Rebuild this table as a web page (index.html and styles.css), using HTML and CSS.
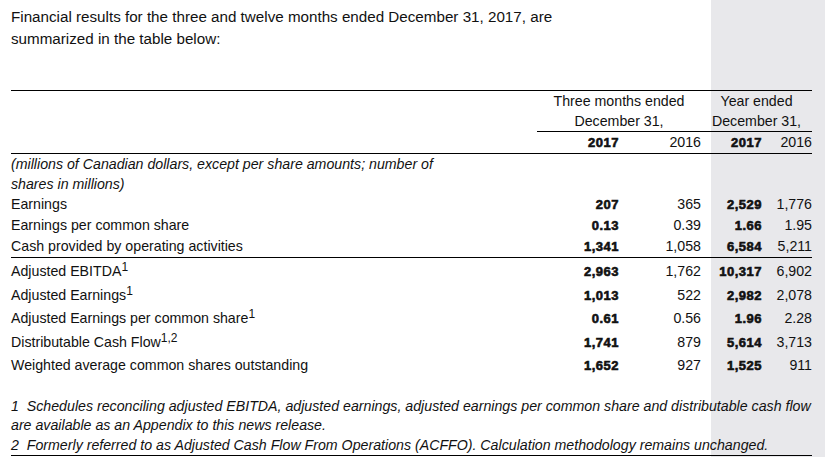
FILE: index.html
```html
<!DOCTYPE html>
<html lang="en">
<head>
<meta charset="utf-8">
<title>Financial results</title>
<link rel="stylesheet" href="styles.css">
</head>
<body>
<div class="page">
  <p class="intro">Financial results for the three and twelve months ended December 31, 2017, are<br>summarized in the table below:</p>

  <table class="results">
    <colgroup>
      <col class="c-label">
      <col class="c-a">
      <col class="c-b">
      <col class="c-c">
      <col class="c-d">
    </colgroup>
    <thead>
      <tr class="group-row">
        <th class="blank"></th>
        <th class="group" colspan="2">Three months ended<br>December 31,</th>
        <th class="group" colspan="2">Year ended<br>December 31,</th>
      </tr>
      <tr class="year-row">
        <th class="blank"></th>
        <th class="num strong">2017</th>
        <th class="num">2016</th>
        <th class="num strong">2017</th>
        <th class="num">2016</th>
      </tr>
    </thead>
    <tbody class="block-one">
      <tr class="note-row">
        <td class="note" colspan="5">(millions of Canadian dollars, except per share amounts; number of<br>shares in millions)</td>
      </tr>
      <tr>
        <td class="label">Earnings</td>
        <td class="num strong">207</td>
        <td class="num">365</td>
        <td class="num strong">2,529</td>
        <td class="num">1,776</td>
      </tr>
      <tr>
        <td class="label">Earnings per common share</td>
        <td class="num strong">0.13</td>
        <td class="num">0.39</td>
        <td class="num strong">1.66</td>
        <td class="num">1.95</td>
      </tr>
      <tr class="last">
        <td class="label">Cash provided by operating activities</td>
        <td class="num strong">1,341</td>
        <td class="num">1,058</td>
        <td class="num strong">6,584</td>
        <td class="num">5,211</td>
      </tr>
    </tbody>
    <tbody class="block-two">
      <tr class="first">
        <td class="label">Adjusted EBITDA<sup>1</sup></td>
        <td class="num strong">2,963</td>
        <td class="num">1,762</td>
        <td class="num strong">10,317</td>
        <td class="num">6,902</td>
      </tr>
      <tr>
        <td class="label">Adjusted Earnings<sup>1</sup></td>
        <td class="num strong">1,013</td>
        <td class="num">522</td>
        <td class="num strong">2,982</td>
        <td class="num">2,078</td>
      </tr>
      <tr>
        <td class="label">Adjusted Earnings per common share<sup>1</sup></td>
        <td class="num strong">0.61</td>
        <td class="num">0.56</td>
        <td class="num strong">1.96</td>
        <td class="num">2.28</td>
      </tr>
      <tr>
        <td class="label">Distributable Cash Flow<sup>1,2</sup></td>
        <td class="num strong">1,741</td>
        <td class="num">879</td>
        <td class="num strong">5,614</td>
        <td class="num">3,713</td>
      </tr>
      <tr>
        <td class="label">Weighted average common shares outstanding</td>
        <td class="num strong">1,652</td>
        <td class="num">927</td>
        <td class="num strong">1,525</td>
        <td class="num">911</td>
      </tr>
    </tbody>
  </table>

  <div class="footnotes">
    <p class="fn">1&nbsp; Schedules reconciling adjusted EBITDA, adjusted earnings, adjusted earnings per common share and distributable cash flow<br>are available as an Appendix to this news release.</p>
    <p class="fn">2&nbsp; Formerly referred to as Adjusted Cash Flow From Operations (ACFFO). Calculation methodology remains unchanged.</p>
  </div>
</div>
</body>
</html>
```

FILE: styles.css
```css
html {
  margin: 0;
}

body {
  margin: 0;
  min-height: 100vh;
  background: linear-gradient(to right, #ffffff 0, #ffffff 711px, #e8e8eb 711px, #e8e8eb 100%);
  color: #111;
  font-family: "Liberation Sans", Arial, sans-serif;
  font-size: 14.2px;
}

.page {
  width: 801px;
  padding: 6px 0 0 11px;
}

.intro {
  margin: 0;
  font-size: 15.2px;
  line-height: 22px;
  white-space: nowrap;
}

.results {
  margin-top: 40px;
  width: 801px;
  table-layout: fixed;
  border-collapse: separate;
  border-spacing: 0;
  font-size: 14.2px;
}

.c-label { width: 526px; }
.c-a { width: 82px; }
.c-b { width: 82px; }
.c-c { width: 61px; }
.c-d { width: 50px; }

.results th,
.results td {
  padding: 0;
  font-weight: 400;
  vertical-align: baseline;
  white-space: nowrap;
}

.group-row th {
  border-top: 1px solid #000;
  line-height: 20px;
}

.group-row .group {
  text-align: center;
  border-bottom: 1px solid #000;
}

.year-row th {
  line-height: 20px;
  border-bottom: 1px solid #000;
}

.num {
  text-align: right;
}

.strong {
  font-size: 13px;
  font-weight: 700 !important;
  letter-spacing: 0.5px;
  -webkit-text-stroke: 0.6px #111;
}

.note {
  font-style: italic;
  line-height: 20px;
}

.block-one td {
  line-height: 21px;
}

.block-one .note {
  line-height: 20px;
}

.block-one .last td {
  border-bottom: 1px solid #000;
}

.block-two td {
  line-height: 22.5px;
}

.block-two .first td {
  padding-top: 2px;
}

.label sup {
  font-size: 12px;
  line-height: 0;
  vertical-align: 5px;
}

.footnotes {
  margin-top: 19px;
  border-bottom: 1px solid #000;
}

.fn {
  margin: 0;
  font-style: italic;
  line-height: 19.5px;
  white-space: nowrap;
}
```
